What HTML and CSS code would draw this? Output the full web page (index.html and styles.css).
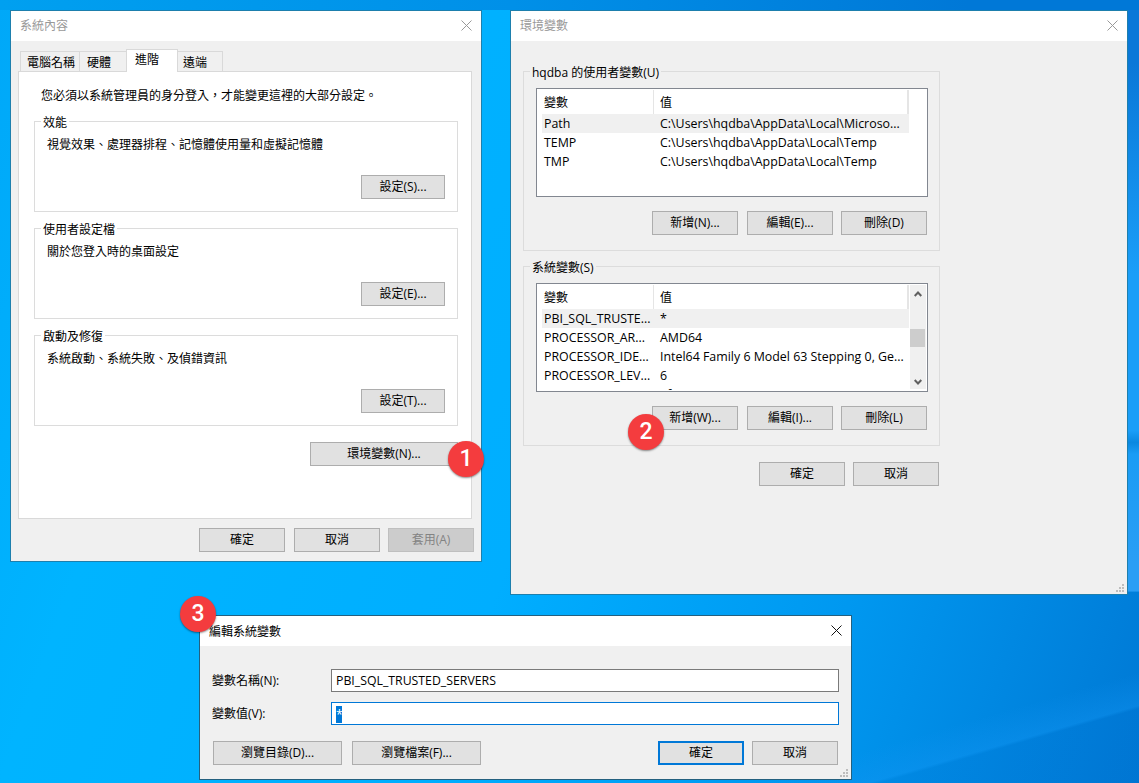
FILE: index.html
```html
<!DOCTYPE html>
<html lang="zh-Hant">
<head>
<meta charset="utf-8">
<title>環境變數設定</title>
<link rel="stylesheet" href="styles.css">
</head>
<body>
<main class="desktop">

  <section class="window win-system">
    <header class="titlebar">
      <span class="title">系統內容</span>
      <svg class="close" viewBox="0 0 11 11"><path d="M.5.5l10 10M10.5.5l-10 10"/></svg>
    </header>
    <div class="system-body">
      <nav class="tabs">
        <span class="tab tab-name">電腦名稱</span>
        <span class="tab tab-hw">硬體</span>
        <span class="tab tab-active">進階</span>
        <span class="tab tab-remote">遠端</span>
      </nav>
      <div class="panel">
        <p class="intro">您必須以系統管理員的身分登入，才能變更這裡的大部分設定。</p>
        <div class="group group-white">
          <span class="legend">效能</span>
          <p class="group-text">視覺效果、處理器排程、記憶體使用量和虛擬記憶體</p>
          <button class="btn btn-settings">設定(S)...</button>
        </div>
        <div class="group group-white">
          <span class="legend">使用者設定檔</span>
          <p class="group-text">關於您登入時的桌面設定</p>
          <button class="btn btn-settings">設定(E)...</button>
        </div>
        <div class="group group-white">
          <span class="legend">啟動及修復</span>
          <p class="group-text">系統啟動、系統失敗、及偵錯資訊</p>
          <button class="btn btn-settings">設定(T)...</button>
        </div>
        <div class="env-row"><button class="btn btn-env">環境變數(N)...</button></div>
      </div>
      <footer class="btn-row system-footer">
        <button class="btn btn-wide">確定</button>
        <button class="btn">取消</button>
        <button class="btn btn-disabled">套用(A)</button>
      </footer>
    </div>
  </section>

  <section class="window win-env">
    <header class="titlebar">
      <span class="title">環境變數</span>
      <svg class="close" viewBox="0 0 11 11"><path d="M.5.5l10 10M10.5.5l-10 10"/></svg>
    </header>
    <div class="env-body">
      <div class="group group-vars">
        <span class="legend legend-grey">hqdba 的使用者變數(U)</span>
        <div class="list">
          <div class="list-main">
            <div class="row row-head"><span class="cell-a">變數</span><span class="cell-b">值</span></div>
            <div class="row row-sel"><span class="cell-a">Path</span><span class="cell-b">C:\Users\hqdba\AppData\Local\Microso...</span></div>
            <div class="row"><span class="cell-a">TEMP</span><span class="cell-b">C:\Users\hqdba\AppData\Local\Temp</span></div>
            <div class="row"><span class="cell-a">TMP</span><span class="cell-b">C:\Users\hqdba\AppData\Local\Temp</span></div>
          </div>
        </div>
        <div class="btn-row var-actions">
          <button class="btn btn-wide">新增(N)...</button>
          <button class="btn">編輯(E)...</button>
          <button class="btn">刪除(D)</button>
        </div>
      </div>
      <div class="group group-vars">
        <span class="legend legend-grey">系統變數(S)</span>
        <div class="list">
          <div class="list-main">
            <div class="row row-head"><span class="cell-a">變數</span><span class="cell-b">值</span></div>
            <div class="row row-sel"><span class="cell-a">PBI_SQL_TRUSTE...</span><span class="cell-b">*</span></div>
            <div class="row"><span class="cell-a">PROCESSOR_AR...</span><span class="cell-b">AMD64</span></div>
            <div class="row"><span class="cell-a">PROCESSOR_IDE...</span><span class="cell-b">Intel64 Family 6 Model 63 Stepping 0, Ge...</span></div>
            <div class="row"><span class="cell-a">PROCESSOR_LEV...</span><span class="cell-b">6</span></div>
            <div class="row"><span class="cell-a">PROCESSOR_RE...</span><span class="cell-b">3f02</span></div>
          </div>
          <div class="scrollbar">
            <svg class="arrow" viewBox="0 0 8 6"><path d="M.7 5L4 1.5 7.3 5"/></svg>
            <div class="thumb"></div>
            <svg class="arrow" viewBox="0 0 8 6"><path d="M.7 1L4 4.5 7.3 1"/></svg>
          </div>
        </div>
        <div class="btn-row var-actions">
          <button class="btn btn-wide">新增(W)...</button>
          <button class="btn">編輯(I)...</button>
          <button class="btn">刪除(L)</button>
        </div>
      </div>
      <div class="btn-row env-footer">
        <button class="btn">確定</button>
        <button class="btn">取消</button>
      </div>
    </div>
    <svg class="grip" viewBox="0 0 8 8"><path d="M6 0h2v2H6zM3 3h2v2H3zM6 3h2v2H6zM0 6h2v2H0zM3 6h2v2H3zM6 6h2v2H6z"/></svg>
  </section>

  <section class="window win-edit">
    <header class="titlebar titlebar-active">
      <span class="title">編輯系統變數</span>
      <svg class="close" viewBox="0 0 11 11"><path d="M.5.5l10 10M10.5.5l-10 10"/></svg>
    </header>
    <div class="edit-body">
      <div class="field">
        <span class="field-label">變數名稱(N):</span>
        <div class="textbox">PBI_SQL_TRUSTED_SERVERS</div>
      </div>
      <div class="field">
        <span class="field-label">變數值(V):</span>
        <div class="textbox textbox-focus"><span class="selection">*</span></div>
      </div>
      <div class="edit-actions">
        <div class="edit-group">
          <button class="btn btn-browse">瀏覽目錄(D)...</button>
          <button class="btn btn-browse">瀏覽檔案(F)...</button>
        </div>
        <div class="edit-group edit-group-tight">
          <button class="btn btn-default">確定</button>
          <button class="btn">取消</button>
        </div>
      </div>
    </div>
    <svg class="grip" viewBox="0 0 8 8"><path d="M6 0h2v2H6zM3 3h2v2H3zM6 3h2v2H6zM0 6h2v2H0zM3 6h2v2H3zM6 6h2v2H6z"/></svg>
  </section>

  <span class="badge badge-1">1</span>
  <span class="badge badge-2">2</span>
  <span class="badge badge-3">3</span>
</main>
</body>
</html>
```

FILE: styles.css
```css
* { box-sizing: border-box; }

html, body { margin: 0; padding: 0; }

body {
  font-family: "Open Sans", "Noto Sans CJK TC", sans-serif;
  font-size: 12px;
  line-height: 16px;
  color: #000;
}

p { margin: 0; }

.desktop {
  position: relative;
  width: 1139px;
  height: 783px;
  overflow: hidden;
  background:
    linear-gradient(90deg, #00a0f0 0%, #0090e8 45%, #0078d7 85%) left top / 100% 10px no-repeat,
    linear-gradient(180deg, #0a78d8 0%, #0a78d8 8%, #1a9ef8 35%, #1a9ef8 55%, #0a88e0 56.5%, #1a9cf5 58%, #2a9ef5 72%, #2a9ef5 75.5%, transparent 75.6%) right top / 12px 100% no-repeat,
    linear-gradient(164deg, transparent 90%, rgba(20, 150, 245, .35) 93%, rgba(0, 100, 200, .12) 93.3%, rgba(0, 100, 200, .12) 100%),
    linear-gradient(110deg, #00a8f8 0%, #00b4ff 20%, #00aeff 50%, #0098f0 75%, #0078d4 100%);
}

/* windows */
.window {
  position: absolute;
  display: flex;
  flex-direction: column;
  background: #f0f0f0;
  border: 1px solid #1d7fad;
}
.win-system { left: 10px; top: 10px; width: 472px; height: 552px; }
.win-env { left: 510px; top: 10px; width: 618px; height: 585px; }
.win-edit { left: 199px; top: 615px; width: 653px; height: 165px; border-color: #24607f; }

.titlebar {
  display: flex;
  flex: none;
  align-items: center;
  justify-content: space-between;
  height: 30px;
  padding: 0 9px 2px 9px;
  background: #fff;
  color: #999;
}
.title { margin-top: 2px; }
.titlebar-active { color: #000; padding-bottom: 0; }
.close { width: 11px; height: 11px; fill: none; stroke: #999; stroke-width: 1; }
.titlebar-active .close { stroke: #111; margin-bottom: 2px; }

.grip { position: absolute; right: 3px; bottom: 2px; width: 8px; height: 8px; fill: #bdbdbd; }

/* buttons */
.btn {
  width: 86px;
  height: 24px;
  padding: 0;
  flex: none;
  font: inherit;
  color: inherit;
  background: #e1e1e1;
  border: 1px solid #adadad;
}
.btn-disabled { background: #ccc; border-color: #bfbfbf; color: #838383; }
.btn-default { border: 2px solid #0078d7; }
.btn-browse { width: 129px; }
.btn-env { width: 148px; }
.btn-settings { width: 84px; align-self: flex-end; margin-top: 22px; }
.btn-row { display: flex; justify-content: flex-end; gap: 8px; }
.btn-wide { margin-right: 1px; }

/* system properties */
.system-body { padding: 8px 0 0 7px; }
.tabs { display: flex; align-items: flex-end; height: 22px; padding-left: 2px; position: relative; z-index: 1; }
.tab {
  height: 20px;
  line-height: 22px;
  background: #f0f0f0;
  border: 1px solid #d9d9d9;
  border-bottom: 0;
  margin-right: -1px;
}
.tab-name { width: 60px; padding-left: 6px; }
.tab-hw { width: 48px; padding-left: 7px; }
.tab-active {
  width: 52px;
  height: 23px;
  padding-left: 8px;
  line-height: 20px;
  background: #fff;
  margin-bottom: -1px;
  position: relative;
  z-index: 1;
}
.tab-remote { width: 46px; padding-left: 5px; }

.panel {
  width: 454px;
  height: 448px;
  padding: 16px 13px 0 15px;
  background: #fff;
  border: 1px solid #d9d9d9;
}
.intro { padding-left: 7px; margin-bottom: 17px; }

.group {
  position: relative;
  display: flex;
  flex-direction: column;
  border: 1px solid #dcdcdc;
}
.group-white { height: 91px; padding: 15px 12px 0; margin-bottom: 16px; }
.legend {
  position: absolute;
  left: 6px;
  top: -8px;
  padding: 1px 2px 0;
  background: #fff;
}
.legend-grey { background: #f0f0f0; }
.env-row { display: flex; justify-content: flex-end; }
.system-footer { width: 456px; margin-top: 9px; }

/* environment variables */
.env-body { padding: 30px 0 0 12px; }
.group-vars { width: 417px; height: 180px; padding: 16px 11px 0 12px; margin-bottom: 15px; }
.list {
  display: flex;
  flex: none;
  height: 109px;
  padding-left: 5px;
  background: #fff;
  border: 1px solid #828790;
  overflow: hidden;
}
.list-main { width: 367px; height: 106px; flex: none; overflow: hidden; }
.row { display: flex; height: 19px; line-height: 19px; white-space: nowrap; font-size: 12.4px; }
.row-head { margin-top: 1px; height: 24px; line-height: 25px; font-size: 12px; }
.row-sel { background: #f0f0f0; }
.cell-a { width: 111px; padding-left: 2px; flex: none; }
.cell-b { flex: 1; padding-left: 7px; }
.row-head .cell-a { border-right: 1px solid #e5e5e5; width: 112px; }
.row-head .cell-b { border-right: 2px solid #e5e5e5; padding-left: 6px; }

.scrollbar {
  display: flex;
  flex-direction: column;
  align-items: center;
  justify-content: flex-start;
  flex: none;
  width: 16px;
  height: 104px;
  margin: 1px 0 0 1px;
  background: #f0f0f0;
}
.arrow { width: 8px; height: 6px; flex: none; margin: 6px 0; fill: none; stroke: #606060; stroke-width: 2; }
.thumb { width: 15px; height: 18px; margin: 26px 0; align-self: flex-start; background: #cdcdcd; flex: none; }
.var-actions { margin: 14px 1px 0 0; }
.env-footer { width: 416px; margin-top: 16px; }

/* edit dialog */
.edit-body { padding: 23px 12px 0; display: flex; flex-direction: column; }
.field { display: flex; align-items: center; margin-bottom: 10px; }
.field-label { width: 119px; flex: none; }
.textbox {
  flex: 1;
  height: 23px;
  line-height: 21px;
  padding-left: 4px;
  font-size: 12.3px;
  background: #fff;
  border: 1px solid #7a7a7a;
}
.textbox-focus { border-color: #0078d7; }
.selection { display: inline-block; width: 6px; background: #0078d7; color: #fff; line-height: 17px; vertical-align: middle; }
.edit-actions { display: flex; justify-content: space-between; padding: 6px 1px 0; }
.edit-group { display: flex; gap: 10px; }
.edit-group-tight { gap: 8px; }

/* numbered callouts */
.badge {
  position: absolute;
  width: 36px;
  height: 36px;
  border-radius: 50%;
  background: #f43c3e;
  color: #fff;
  font-family: Roboto, "Liberation Sans", sans-serif;
  font-size: 23px;
  font-weight: 500;
  line-height: 36px;
  text-align: center;
  box-shadow: 0 1px 2px rgba(0, 0, 0, .45);
}
.badge-1 { left: 448px; top: 441px; }
.badge-2 { left: 628px; top: 414px; }
.badge-3 { left: 180px; top: 596px; }
```
